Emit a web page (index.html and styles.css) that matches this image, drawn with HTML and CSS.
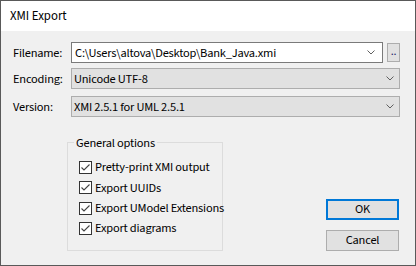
FILE: index.html
```html
<!DOCTYPE html>
<html>
<head>
<meta charset="utf-8">
<link rel="stylesheet" href="styles.css">
</head>
<body>
<div class="window">
  <div class="titlebar">XMI Export</div>
  <div class="client">
    <div class="row first">
      <span class="label">Filename:</span>
      <div class="combo edit">
        <span class="value">C:\Users\altova\Desktop\Bank_Java.xmi</span>
        <svg class="chev" width="8" height="5" viewBox="0 0 8 5"><polyline points="0.5,0.5 4,4 7.5,0.5" fill="none" stroke="#606060" stroke-width="1"/></svg>
      </div>
      <div class="browse">..</div>
    </div>
    <div class="row second">
      <span class="label">Encoding:</span>
      <div class="combo list">
        <span class="value">Unicode UTF-8</span>
        <svg class="chev" width="8" height="5" viewBox="0 0 8 5"><polyline points="0.5,0.5 4,4 7.5,0.5" fill="none" stroke="#606060" stroke-width="1"/></svg>
      </div>
    </div>
    <div class="row third">
      <span class="label">Version:</span>
      <div class="combo list">
        <span class="value">XMI 2.5.1 for UML 2.5.1</span>
        <svg class="chev" width="8" height="5" viewBox="0 0 8 5"><polyline points="0.5,0.5 4,4 7.5,0.5" fill="none" stroke="#606060" stroke-width="1"/></svg>
      </div>
    </div>
    <div class="bottom">
      <fieldset class="group">
        <legend>General options</legend>
        <div class="check"><span class="box"><svg width="11" height="11" viewBox="0 0 11 11"><polyline points="1.5,5.5 4,8 9.5,2.5" fill="none" stroke="#444" stroke-width="1.1"/></svg></span>Pretty-print XMI output</div>
        <div class="check"><span class="box"><svg width="11" height="11" viewBox="0 0 11 11"><polyline points="1.5,5.5 4,8 9.5,2.5" fill="none" stroke="#444" stroke-width="1.1"/></svg></span>Export UUIDs</div>
        <div class="check"><span class="box"><svg width="11" height="11" viewBox="0 0 11 11"><polyline points="1.5,5.5 4,8 9.5,2.5" fill="none" stroke="#444" stroke-width="1.1"/></svg></span>Export UModel Extensions</div>
        <div class="check"><span class="box"><svg width="11" height="11" viewBox="0 0 11 11"><polyline points="1.5,5.5 4,8 9.5,2.5" fill="none" stroke="#444" stroke-width="1.1"/></svg></span>Export diagrams</div>
      </fieldset>
      <div class="buttons">
        <div class="btn default">OK</div>
        <div class="btn">Cancel</div>
      </div>
    </div>
  </div>
</div>
</body>
</html>
```
FILE: styles.css
```css
html, body {
  margin: 0;
  padding: 0;
}
body {
  font-family: "Source Sans 3", "Noto Sans", sans-serif;
  font-size: 12.4px;
  letter-spacing: -0.2px;
  color: #000;
  background: #fff;
}
.window {
  width: 416px;
  height: 266px;
  box-sizing: border-box;
  border: 1px solid #595959;
  display: flex;
  flex-direction: column;
}
.titlebar {
  height: 30px;
  background: #fff;
  padding-left: 9px;
  line-height: 31px;
  font-size: 12.8px;
  letter-spacing: 0;
  flex: none;
}
.client {
  flex: 1;
  background: #f0f0f0;
  padding: 11px 15px 14px 11px;
  display: flex;
  flex-direction: column;
}
.row {
  display: flex;
  align-items: center;
  height: 21px;
  flex: none;
}
.second { margin-top: 5px; }
.third { margin-top: 7px; }
.label {
  width: 58px;
  flex: none;
  padding-left: 1px;
}
.combo {
  box-sizing: border-box;
  height: 21px;
  display: flex;
  align-items: center;
  padding-left: 3px;
  padding-right: 7px;
}
.combo .value { flex: 1; white-space: nowrap; }
.edit {
  width: 312px;
  background: #fff;
  border: 1px solid #7a7a7a;
}
.list {
  flex: 1;
  background: #e1e1e1;
  border: 1px solid #adadad;
  padding-left: 2px;
  padding-right: 5px;
}
.chev { flex: none; }
.browse {
  box-sizing: border-box;
  width: 13px;
  height: 19px;
  margin-left: 4px;
  background: #e1e1e1;
  border: 1px solid #adadad;
  font-size: 12px;
  line-height: 15px;
  text-align: center;
  color: #1a1a6a;
}
.bottom {
  flex: 1;
  display: flex;
  align-items: flex-end;
}
.group {
  margin: 0 0 0 55px;
  width: 156px;
  min-width: 0;
  box-sizing: border-box;
  border: 1px solid #dcdcdc;
  padding: 6.5px 0 11.5px 11px;
}
.group legend {
  padding: 0 2px;
  margin-left: -5px;
  line-height: 16px;
}
.check {
  display: flex;
  align-items: center;
  height: 20.33px;
  white-space: nowrap;
}
.box {
  box-sizing: border-box;
  width: 13px;
  height: 13px;
  border: 1px solid #333;
  background: #fff;
  margin-right: 3px;
  display: flex;
  flex: none;
}
.buttons {
  margin-left: auto;
  margin-right: 1px;
  display: flex;
  flex-direction: column;
  gap: 10px;
}
.btn {
  box-sizing: border-box;
  width: 73px;
  height: 21px;
  background: #e1e1e1;
  border: 1px solid #adadad;
  text-align: center;
  line-height: 19px;
}
.btn.default {
  border: 2px solid #0078d7;
  line-height: 17px;
}
```
